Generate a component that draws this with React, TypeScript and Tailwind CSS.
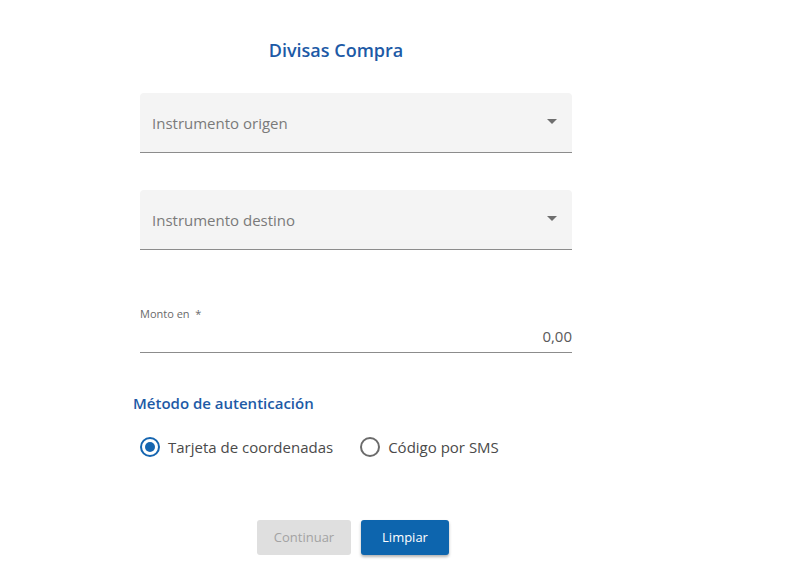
import { useState } from 'react';

function SelectField({ label }: { label: string }) {
  return (
    <div className="flex h-[60px] items-center justify-between rounded-t-[4px] border-b border-[#8c8c8c] bg-[#f4f4f4] pl-3 pr-[15px]">
      <span className="pt-[2px] text-[15px] text-[#7a7a7a]">{label}</span>
      <svg width="10" height="5" viewBox="0 0 10 5" className="mb-[2px]">
        <path d="M0 0 L10 0 L5 5 Z" fill="#6e6e6e" />
      </svg>
    </div>
  );
}

function Radio({ checked, label, onClick }: { checked: boolean; label: string; onClick: () => void }) {
  return (
    <button type="button" onClick={onClick} className="flex items-center gap-2">
      <span
        className={
          checked
            ? 'flex h-5 w-5 items-center justify-center rounded-full border-2 border-[#1565b0]'
            : 'flex h-5 w-5 items-center justify-center rounded-full border-2 border-[#6b6b6b]'
        }
      >
        {checked && <span className="h-[10px] w-[10px] rounded-full bg-[#1565b0]" />}
      </span>
      <span className="text-[15px] text-[#4a4a4a]">{label}</span>
    </button>
  );
}

export default function App() {
  const [method, setMethod] = useState<'card' | 'sms'>('card');

  return (
    <div className="min-h-screen bg-white" style={{ fontFamily: '"Open Sans", "Noto Sans", sans-serif' }}>
      <div className="ml-[140px] w-[432px] pt-[37px]">
        <h1 className="pr-[40px] text-center text-[18px] font-semibold text-[#1d5aa6]">Divisas Compra</h1>

        <div className="mt-[29px] flex flex-col gap-[37px]">
          <SelectField label="Instrumento origen" />
          <SelectField label="Instrumento destino" />
        </div>

        <div className="mt-[56px] border-b border-[#8c8c8c] pb-[5px]">
          <div className="text-[11px] text-[#6a6a6a]">Monto en &nbsp;*</div>
          <div className="mt-[2px] text-right text-[15px] text-[#5a5a5a]">0,00</div>
        </div>

        <h2 className="-ml-[7px] mt-[39px] text-[15px] font-semibold text-[#1d5aa6]">Método de autenticación</h2>

        <div className="mt-[21px] flex items-center gap-[27px]">
          <Radio checked={method === 'card'} label="Tarjeta de coordenadas" onClick={() => setMethod('card')} />
          <Radio checked={method === 'sms'} label="Código por SMS" onClick={() => setMethod('sms')} />
        </div>

        <div className="ml-[117px] mt-[62px] flex gap-[10px]">
          <button type="button" disabled className="h-[35px] w-[94px] rounded-[3px] bg-[#dfdfdf] text-[13px] text-[#a3a3a3]">
            Continuar
          </button>
          <button type="button" className="h-[35px] w-[88px] rounded-[3px] bg-[#0d65ae] text-[13px] text-white shadow-[0_2px_3px_rgba(0,0,0,0.3)]">
            Limpiar
          </button>
        </div>
      </div>
    </div>
  );
}
